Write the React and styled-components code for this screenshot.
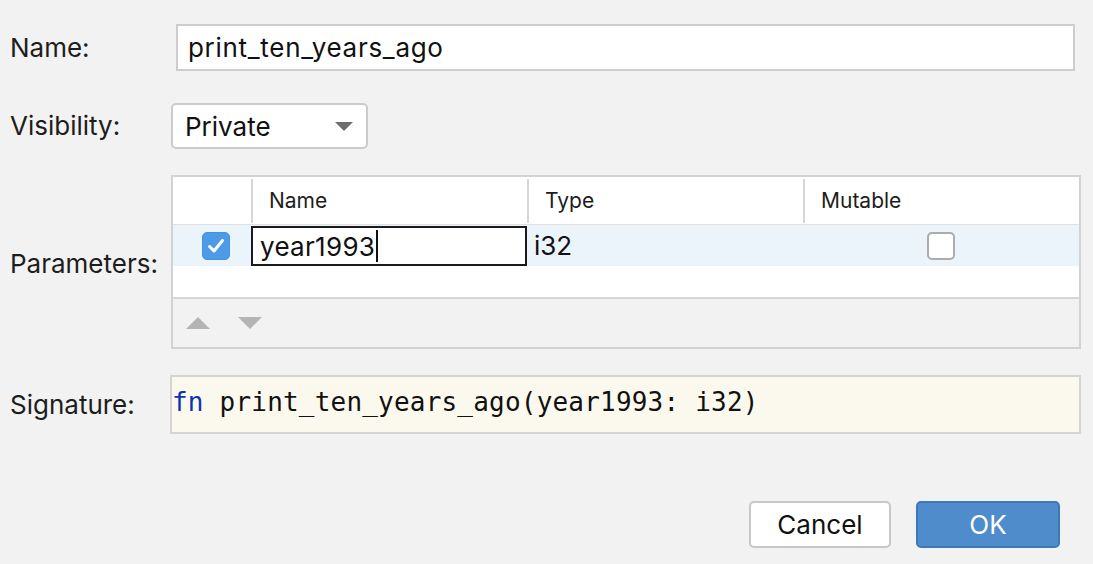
import React from 'react';
import styled, { createGlobalStyle } from 'styled-components';

const GlobalStyle = createGlobalStyle`
  html, body {
    margin: 0;
    padding: 0;
    background: #f2f2f2;
  }
  body {
    font-family: Inter, "Liberation Sans", sans-serif;
    color: #1d1d1d;
  }
`;

const Dialog = styled.div`
  width: 1093px;
  height: 564px;
  box-sizing: border-box;
  padding: 24px 12px 0 10px;
  background: #f2f2f2;
  overflow: hidden;
`;

const Form = styled.div`
  display: grid;
  grid-template-columns: 160px 1fr;
  row-gap: 26px;
  align-items: center;
`;

const Label = styled.div`
  font-size: 26px;
  line-height: 30px;
  color: #1d1d1d;
  margin-top: ${p => p.$nudge || 0}px;
`;

const TextInput = styled.div`
  height: 47px;
  box-sizing: border-box;
  margin: 0 6px 6px 6px;
  padding: 0 10px;
  display: flex;
  align-items: center;
  background: #fff;
  border: 2px solid #cdcdcd;
  font-size: 26px;
  letter-spacing: 0.7px;
  color: #111;
`;

const Select = styled.div`
  width: 197px;
  height: 46px;
  box-sizing: border-box;
  margin-left: 1px;
  padding: 0 13px 0 12px;
  display: flex;
  align-items: center;
  justify-content: space-between;
  background: #fff;
  border: 2px solid #cbcbcb;
  border-radius: 5px;
  font-size: 26px;
  color: #111;
`;

const Caret = styled.span`
  width: 0;
  height: 0;
  border-left: ${p => p.$size}px solid transparent;
  border-right: ${p => p.$size}px solid transparent;
  ${p => p.$up
    ? `border-bottom: ${p.$h}px solid ${p.$color};`
    : `border-top: ${p.$h}px solid ${p.$color};`}
`;

const Table = styled.div`
  margin-left: 1px;
  height: 174px;
  box-sizing: border-box;
  border: 2px solid #d2d2d2;
  display: flex;
  flex-direction: column;
  background: #fff;
`;

const Cols = styled.div`
  display: grid;
  grid-template-columns: 78px 276px 276px 1fr;
`;

const HeadRow = styled(Cols)`
  height: 47px;
  border-bottom: 1px solid #e0e0e0;
  align-items: center;
`;

const HeadCell = styled.div`
  height: 44px;
  display: flex;
  align-items: center;
  padding-left: 16px;
  font-size: 21px;
  color: #1d1d1d;
  border-left: ${p => (p.$first ? 'none' : '2px solid #d6d6d6')};
  box-sizing: border-box;
`;

const DataRow = styled(Cols)`
  height: 41px;
  background: #ebf3fb;
  align-items: center;
`;

const Cell = styled.div`
  height: 100%;
  display: flex;
  align-items: center;
  justify-content: ${p => p.$center ? 'center' : 'flex-start'};
  padding-left: ${p => p.$pad || 0}px;
  font-size: 26px;
  color: #111;
  box-sizing: border-box;
`;

const Editor = styled.div`
  height: 40px;
  margin-top: 1px;
  box-sizing: border-box;
  border: 2px solid #1a1a1a;
  background: #fff;
  display: flex;
  align-items: center;
  padding-left: 7px;
  font-size: 26px;
  letter-spacing: 0.3px;
  color: #111;
`;

const Cursor = styled.span`
  display: inline-block;
  width: 2px;
  height: 32px;
  background: #111;
  margin-left: 1px;
`;

const Box = styled.div`
  width: 28px;
  height: 28px;
  box-sizing: border-box;
  border-radius: 5px;
  display: flex;
  align-items: center;
  justify-content: center;
  background: ${p => (p.$checked ? '#4d9ae6' : '#fff')};
  border: ${p => (p.$checked ? '1px solid #4891dc' : '2px solid #ababab')};
`;

const Filler = styled.div`
  flex: 1;
  border-bottom: 2px solid #d6d6d6;
`;

const Toolbar = styled.div`
  height: 48px;
  background: #f2f2f2;
  display: flex;
  align-items: center;
  gap: 28px;
  padding: 0 0 0 13px;
`;

const Signature = styled.div`
  height: 59px;
  box-sizing: border-box;
  border: 2px solid #d4d4d4;
  background: #fbf9ed;
  padding: 10px 0 0 0;
  font-family: "DejaVu Sans Mono", "Liberation Mono", monospace;
  font-size: 26px;
  line-height: 30px;
  letter-spacing: 0.2px;
  color: #111;
  white-space: pre;
`;

const Keyword = styled.span`
  color: #0b33b8;
`;

const Footer = styled.div`
  margin-top: 67px;
  display: flex;
  justify-content: flex-end;
  gap: 25px;
  padding-right: 21px;
`;

const Button = styled.div`
  width: ${p => (p.$primary ? 144 : 142)}px;
  height: 47px;
  box-sizing: border-box;
  border-radius: 5px;
  display: flex;
  align-items: center;
  justify-content: center;
  font-size: 26px;
  color: ${p => (p.$primary ? '#fff' : '#111')};
  background: ${p => (p.$primary ? '#4e8ccc' : '#fff')};
  border: 2px solid ${p => (p.$primary ? '#3f78b8' : '#c8c8c8')};
`;

const Check = () => (
  <svg width="20" height="20" viewBox="0 0 20 20">
    <path d="M3.5 10.5 L8 15 L16.5 4.5" fill="none" stroke="#fff" strokeWidth="3" strokeLinecap="round" strokeLinejoin="round" />
  </svg>
);

export default function App() {
  return (
    <Dialog>
      <GlobalStyle />
      <Form>
        <Label $nudge={-6}>Name:</Label>
        <TextInput>print_ten_years_ago</TextInput>

        <Label>Visibility:</Label>
        <Select>
          Private
          <Caret $size={9} $h={9} $color="#6e6e6e" />
        </Select>

        <Label $nudge={4}>Parameters:</Label>
        <Table>
          <HeadRow>
            <HeadCell $first />
            <HeadCell>Name</HeadCell>
            <HeadCell>Type</HeadCell>
            <HeadCell>Mutable</HeadCell>
          </HeadRow>
          <DataRow>
            <Cell $center style={{ paddingLeft: 8 }}>
              <Box $checked>
                <Check />
              </Box>
            </Cell>
            <Editor>
              year1993
              <Cursor />
            </Editor>
            <Cell $pad={7}>i32</Cell>
            <Cell $center>
              <Box />
            </Cell>
          </DataRow>
          <Filler />
          <Toolbar>
            <Caret $up $size={12} $h={12} $color="#b4b4b4" />
            <Caret $size={12} $h={12} $color="#b4b4b4" />
          </Toolbar>
        </Table>

        <Label>Signature:</Label>
        <Signature>
          <Keyword>fn</Keyword> print_ten_years_ago(year1993: i32)
        </Signature>
      </Form>
      <Footer>
        <Button>Cancel</Button>
        <Button $primary>OK</Button>
      </Footer>
    </Dialog>
  );
}
